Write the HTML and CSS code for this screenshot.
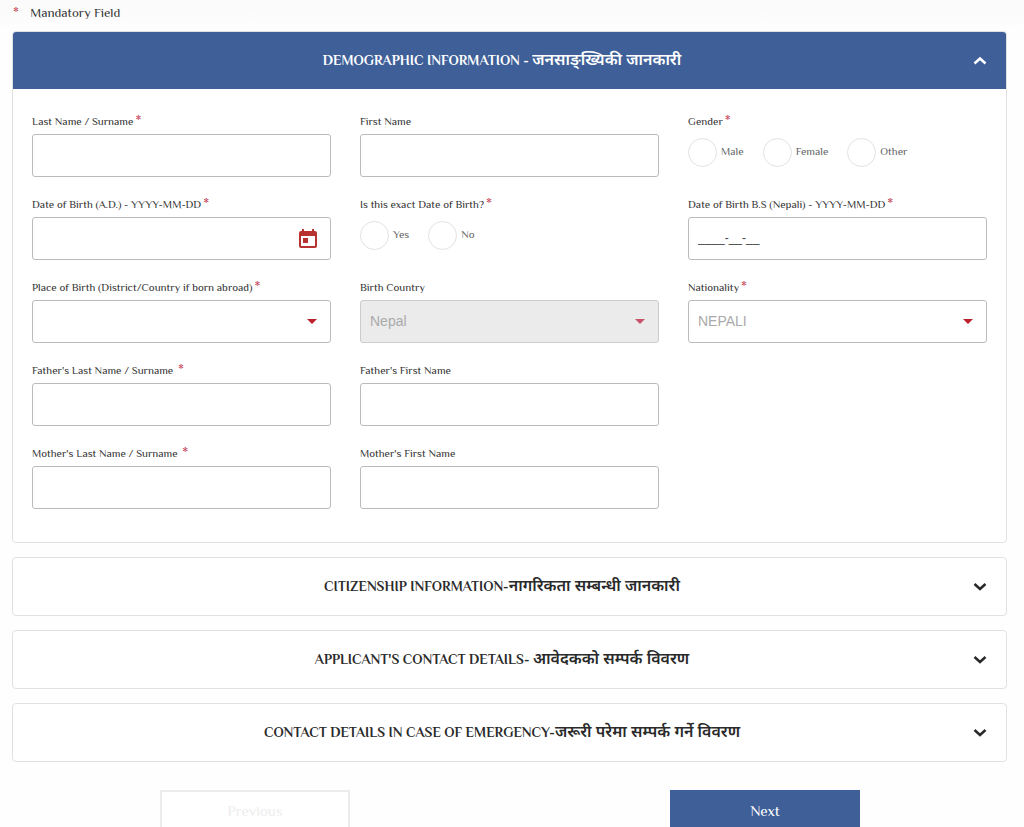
FILE: index.html
```html
<!DOCTYPE html>
<html lang="en">
<head>
<meta charset="utf-8">
<meta name="viewport" content="width=device-width, initial-scale=1">
<title>Demographic Information</title>
<link rel="stylesheet" href="styles.css">
</head>
<body>
<form class="page">
  <p class="legend"><span class="star">*</span> Mandatory Field</p>
  <div class="accordion">
    <section class="panel">
      <h2 class="heading"><button type="button" class="toggle open" aria-expanded="true"><span class="title">DEMOGRAPHIC INFORMATION - <span lang="ne" class="nepali">जनसाङ्ख्यिकी जानकारी</span></span><svg class="chevron" viewBox="0 0 14 10" aria-hidden="true"><path d="M1.500 7.500 7 2.500 12.500 7.500"/></svg></button></h2>
      <div class="fields">
        <div class="field">
          <label class="label" for="last">Last Name / Surname<span class="star">*</span></label>
          <input class="control" id="last" type="text">
        </div>
        <div class="field">
          <label class="label" for="first">First Name</label>
          <input class="control" id="first" type="text">
        </div>
        <fieldset class="field">
          <legend class="label">Gender<span class="star">*</span></legend>
          <div class="radios">
            <label class="choice"><input type="radio" name="gender">Male</label>
            <label class="choice"><input type="radio" name="gender">Female</label>
            <label class="choice"><input type="radio" name="gender">Other</label>
          </div>
        </fieldset>
        <div class="field">
          <label class="label" for="dob">Date of Birth (A.D.) - YYYY-MM-DD<span class="star">*</span></label>
          <div class="wrap">
            <input class="control" id="dob" type="text">
            <button type="button" class="calendar" aria-label="Choose date"><svg viewBox="0 0 18 20" aria-hidden="true"><path fill-rule="evenodd" d="M3 0h2v2h8V0h2v2h1a2 2 0 0 1 2 2v13a2 2 0 0 1-2 2H2a2 2 0 0 1-2-2V4a2 2 0 0 1 2-2h1zM2 7v10h14V7zM4 9h5v5H4z"/></svg></button>
          </div>
        </div>
        <fieldset class="field">
          <legend class="label">Is this exact Date of Birth?<span class="star">*</span></legend>
          <div class="radios">
            <label class="choice"><input type="radio" name="exact">Yes</label>
            <label class="choice"><input type="radio" name="exact">No</label>
          </div>
        </fieldset>
        <div class="field">
          <label class="label" for="dobbs">Date of Birth B.S (Nepali) - YYYY-MM-DD<span class="star">*</span></label>
          <input class="control mask" id="dobbs" type="text" value="____-__-__">
        </div>
        <div class="field">
          <label class="label" for="place">Place of Birth (District/Country if born abroad)<span class="star">*</span></label>
          <div class="wrap">
            <select class="control" id="place"><option></option></select>
            <svg class="caret" viewBox="0 0 10 5" aria-hidden="true"><path d="M0 0h10L5 5z"/></svg>
          </div>
        </div>
        <div class="field">
          <label class="label" for="country">Birth Country</label>
          <div class="wrap">
            <select class="control" id="country" disabled><option>Nepal</option></select>
            <svg class="caret muted" viewBox="0 0 10 5" aria-hidden="true"><path d="M0 0h10L5 5z"/></svg>
          </div>
        </div>
        <div class="field">
          <label class="label" for="nationality">Nationality<span class="star">*</span></label>
          <div class="wrap">
            <select class="control" id="nationality"><option>NEPALI</option></select>
            <svg class="caret" viewBox="0 0 10 5" aria-hidden="true"><path d="M0 0h10L5 5z"/></svg>
          </div>
        </div>
        <div class="field first-column">
          <label class="label" for="flast">Father's Last Name / Surname <span class="star">*</span></label>
          <input class="control" id="flast" type="text">
        </div>
        <div class="field">
          <label class="label" for="ffirst">Father's First Name</label>
          <input class="control" id="ffirst" type="text">
        </div>
        <div class="field first-column">
          <label class="label" for="mlast">Mother's Last Name / Surname <span class="star">*</span></label>
          <input class="control" id="mlast" type="text">
        </div>
        <div class="field">
          <label class="label" for="mfirst">Mother's First Name</label>
          <input class="control" id="mfirst" type="text">
        </div>
      </div>
    </section>
    <section class="panel">
      <h2 class="heading"><button type="button" class="toggle" aria-expanded="false"><span class="title">CITIZENSHIP INFORMATION-<span lang="ne" class="nepali">नागरिकता सम्बन्धी जानकारी</span></span><svg class="chevron" viewBox="0 0 14 10" aria-hidden="true"><path d="M1.500 2 7 7 12.500 2"/></svg></button></h2>
    </section>
    <section class="panel">
      <h2 class="heading"><button type="button" class="toggle" aria-expanded="false"><span class="title">APPLICANT'S CONTACT DETAILS- <span lang="ne" class="nepali">आवेदकको सम्पर्क विवरण</span></span><svg class="chevron" viewBox="0 0 14 10" aria-hidden="true"><path d="M1.500 2 7 7 12.500 2"/></svg></button></h2>
    </section>
    <section class="panel">
      <h2 class="heading"><button type="button" class="toggle" aria-expanded="false"><span class="title">CONTACT DETAILS IN CASE OF EMERGENCY-<span lang="ne" class="nepali">जरूरी परेमा सम्पर्क गर्ने विवरण</span></span><svg class="chevron" viewBox="0 0 14 10" aria-hidden="true"><path d="M1.500 2 7 7 12.500 2"/></svg></button></h2>
    </section>
  </div>
  <div class="actions">
    <button type="button" class="action" disabled>Previous</button>
    <button type="button" class="action primary">Next</button>
  </div>
</form>
</body>
</html>
```

FILE: styles.css
```css
* {
  box-sizing: border-box;
}

body {
  margin: 0;
  background: #fefefe;
  color: #333;
  font-family: Philosopher, Lato, "Noto Sans", sans-serif;
  font-size: 11px;
}

button,
input,
select {
  font: inherit;
  color: inherit;
}

.legend {
  margin: 0;
  padding: 4px 13px 9px;
  font-size: 13px;
  line-height: 18px;
  background: linear-gradient(#f9faf9, #fefefe);
}

.star {
  color: #c2334d;
  font-size: 14px;
  line-height: 0;
}

.legend .star {
  margin-right: 8px;
}

.accordion {
  display: grid;
  gap: 14px;
  padding: 0 17px 0 12px;
}

.panel {
  border: 1px solid #e0e2e2;
  border-radius: 4px;
  background: #fff;
  overflow: hidden;
}

.heading {
  margin: 0;
  font-size: 14px;
  font-weight: 700;
}

.toggle {
  display: flex;
  align-items: center;
  width: 100%;
  height: 57px;
  padding: 0 19px 0 18px;
  border: 0;
  background: none;
  color: #2a2a2a;
}

.toggle.open {
  background: #3f5f98;
  color: #fff;
}

.title {
  flex: 1;
  padding-top: 2px;
}

.nepali {
  font-family: "Noto Sans Devanagari", "Noto Sans", sans-serif;
  font-size: 16px;
  font-weight: 600;
}

.chevron {
  width: 14px;
  height: 10px;
  fill: none;
  stroke: currentColor;
  stroke-width: 2.5;
}

.fields {
  display: grid;
  grid-template-columns: repeat(3, minmax(0, 1fr));
  gap: 19px 29px;
  padding: 24px 19px 33px;
}

.first-column {
  grid-column-start: 1;
}

.field {
  min-width: 0;
  margin: 0;
  padding: 0;
  border: 0;
}

.label {
  display: block;
  height: 16px;
  padding: 0;
  margin-bottom: 5px;
  line-height: 16px;
  white-space: nowrap;
}

.label .star {
  margin-left: 2px;
}

.wrap {
  position: relative;
}

.control {
  display: block;
  width: 100%;
  height: 43px;
  padding: 0 9px 2px;
  border: 1px solid #bbb;
  border-radius: 3px;
  background: #fff;
  color: #aaa;
  font-family: "Liberation Sans", Arial, sans-serif;
  font-size: 14px;
  appearance: none;
  opacity: 1;
}

.control:disabled {
  background: #ebebeb;
  border-color: #ccc;
}

.mask {
  color: #444;
  font-size: 12px;
}

.caret {
  position: absolute;
  top: 19px;
  right: 14px;
  width: 10px;
  height: 5px;
  fill: #b8202c;
  pointer-events: none;
}

.caret.muted {
  fill: #c4556b;
}

.calendar {
  position: absolute;
  top: 12px;
  right: 14px;
  width: 18px;
  height: 20px;
  padding: 0;
  border: 0;
  background: none;
}

.calendar svg {
  display: block;
  fill: #b8322f;
}

.radios {
  display: flex;
  gap: 19px;
  padding-top: 4px;
}

.choice {
  display: flex;
  gap: 4px;
  color: #666;
  line-height: 26px;
}

.choice input {
  width: 29px;
  height: 29px;
  margin: 0;
  border: 1px solid #e2e2e2;
  border-radius: 50%;
  background: #fff;
  appearance: none;
}

.actions {
  display: grid;
  grid-template-columns: 1fr 1fr;
  justify-items: center;
  padding: 28px 4px 0 0;
}

.action {
  width: 190px;
  height: 44px;
  padding: 0 0 4px;
  border: 2px solid #ececec;
  background: #fff;
  color: #ededed;
  font-size: 15px;
}

.action.primary {
  border-color: #3f5f98;
  background: #3f5f98;
  color: #fff;
}
```
